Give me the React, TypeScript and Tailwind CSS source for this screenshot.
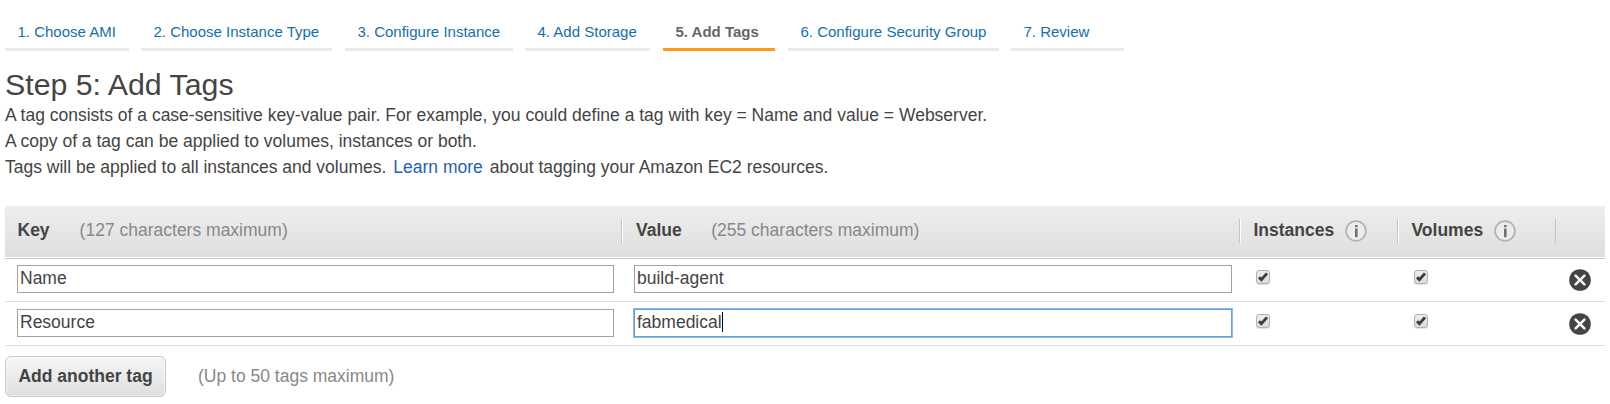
import { useState } from "react";

const tabs = [
  { label: "1. Choose AMI", box: "w-[124px] mr-3", active: false },
  { label: "2. Choose Instance Type", box: "w-[191px] mr-[13px]", active: false },
  { label: "3. Configure Instance", box: "w-[168px] mr-3", active: false },
  { label: "4. Add Storage", box: "w-[125px] mr-[13px]", active: false },
  { label: "5. Add Tags", box: "w-[112px] mr-[13px]", active: true },
  { label: "6. Configure Security Group", box: "w-[211px] mr-3", active: false },
  { label: "7. Review", box: "w-[113px]", active: false },
];

const rows = [
  { key: "Name", value: "build-agent", focused: false },
  { key: "Resource", value: "fabmedical", focused: true },
];

function InfoIcon() {
  return (
    <svg width="22" height="22" viewBox="0 0 22 22" className="block shrink-0">
      <circle cx="11" cy="11" r="9.9" fill="#ececec" stroke="#b2b2b2" strokeWidth="1.7" />
      <rect x="10" y="5" width="2.6" height="2.2" fill="#707070" />
      <rect x="10" y="8.6" width="2.6" height="8.6" fill="#707070" />
    </svg>
  );
}

function RemoveIcon() {
  return (
    <svg width="22" height="22" viewBox="0 0 22 22" className="block">
      <circle cx="11" cy="11" r="10.8" fill="#444" />
      <path d="M6.6 6.6 15.4 15.4M15.4 6.6 6.6 15.4" stroke="#f4f4f4" strokeWidth="2.6" strokeLinecap="round" />
    </svg>
  );
}

function Check({ label }: { label: string }) {
  const [on, setOn] = useState(true);
  return (
    <button
      role="checkbox"
      aria-checked={on}
      aria-label={label}
      onClick={() => setOn(!on)}
      className="block size-[14px] rounded-[3px] border border-[#b0b0b0] bg-linear-to-b from-[#eeeeee] to-[#dcdcdc] shadow-[0_1px_1px_rgba(0,0,0,0.12)]"
    >
      {on && (
        <svg width="12" height="12" viewBox="0 0 12 12" className="block">
          <path d="M2 6.2 4.4 8.6 10 2.4" fill="none" stroke="#3c3c3c" strokeWidth="2.9" />
        </svg>
      )}
    </button>
  );
}

function Separator() {
  return <div className="h-6 w-0.5 border-r border-l border-r-white border-l-[#c4c4c4]" />;
}

function Field({ text, focused = false }: { text: string; focused?: boolean }) {
  return (
    <div
      className={
        focused
          ? "flex h-7 items-start border border-[#6a9ae0] pl-[2px] shadow-[0_0_0_1px_#8db7f2]"
          : "flex h-7 items-start border border-[#a3a3a3] pl-[2px]"
      }
    >
      <span className="leading-[24px]">{text}</span>
      {focused && <span className="mt-[2px] h-5 w-px bg-black" />}
    </div>
  );
}

const columns = "grid grid-cols-[616px_618px_158px_158px_50px]";

export default function App() {
  return (
    <main className="h-[404px] w-[1610px] overflow-hidden bg-white pt-[18px] pr-[5px] pl-[5px] font-['Liberation_Sans',Arial,sans-serif] text-[17.5px] text-[#444]">
      <nav className="flex h-[33px] text-[15px] leading-[28px]">
        {tabs.map((t) => (
          <a
            key={t.label}
            className={`${t.box} block shrink-0 border-b-[3px] pl-[12.5px] whitespace-nowrap ${
              t.active ? "border-[#ff9914] font-bold text-[#666]" : "border-[#eaeaea] text-[#146eb4]"
            }`}
          >
            {t.label}
          </a>
        ))}
      </nav>

      <h1 className="mt-4 h-[35px] text-[30.3px] leading-[36px] whitespace-nowrap">Step 5: Add Tags</h1>
      <div className="leading-[26px] whitespace-nowrap">
        <p>A tag consists of a case-sensitive key-value pair. For example, you could define a tag with key = Name and value = Webserver.</p>
        <p>A copy of a tag can be applied to volumes, instances or both.</p>
        <p>
          Tags will be applied to all instances and volumes.<a className="mx-[7px] text-[#1e5fbc]">Learn more</a>about tagging your Amazon EC2 resources.
        </p>
      </div>

      <section className="mt-[26px]">
        <div className={`${columns} h-[51px] bg-linear-to-b from-[#eeeeee] to-[#dedede] leading-[48px] whitespace-nowrap`}>
          <div className="flex pl-[12.5px]">
            <b>Key</b>
            <span className="ml-[30px] text-[#888]">(127 characters maximum)</span>
          </div>
          <div className="flex">
            <div className="mr-[13px] pt-[13px]"><Separator /></div>
            <b>Value</b>
            <span className="ml-[29.5px] text-[#888]">(255 characters maximum)</span>
          </div>
          <div className="flex">
            <div className="mr-[12.5px] pt-[13px]"><Separator /></div>
            <b>Instances</b>
            <div className="ml-[10.5px] pt-[14px]"><InfoIcon /></div>
          </div>
          <div className="flex">
            <div className="mr-[12.5px] pt-[13px]"><Separator /></div>
            <b>Volumes</b>
            <div className="ml-[10.5px] pt-[14px]"><InfoIcon /></div>
          </div>
          <div className="pt-[13px]"><div className="h-6 w-px bg-[#c4c4c4]" /></div>
        </div>
        <div className="mt-px h-px bg-[#c8c8c8]" />
        {rows.map((r, i) => (
          <div key={r.key} className={`${columns} border-b border-[#dddddd] ${i === 0 ? "h-[43px] pt-[6px]" : "h-[44px] pt-[7px]"}`}>
            <div className="pr-[7px] pl-3"><Field text={r.key} /></div>
            <div className="pr-[7px] pl-[13px]"><Field text={r.value} focused={r.focused} /></div>
            <div className="pt-[5px] pl-[17px]"><Check label="Instances" /></div>
            <div className="pt-[5px] pl-[17px]"><Check label="Volumes" /></div>
            <div className="pt-[4px] pl-[14px]"><RemoveIcon /></div>
          </div>
        ))}
      </section>

      <div className="mt-[10px] flex items-center whitespace-nowrap">
        <button className="h-[41px] w-[161px] rounded-[6px] border border-[#c8c8c8] bg-linear-to-b from-[#f6f6f6] to-[#dfdfdf] font-bold shadow-[inset_0_0_0_1px_rgba(255,255,255,0.5)]">
          Add another tag
        </button>
        <span className="ml-8 text-[#888]">(Up to 50 tags maximum)</span>
      </div>
    </main>
  );
}
